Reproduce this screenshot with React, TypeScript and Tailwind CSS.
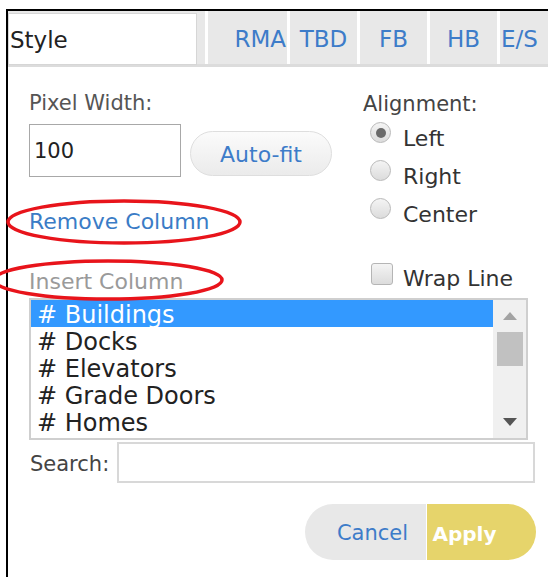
import { useState } from 'react';

const tabs = [
  { label: 'RMA', cls: 'w-[79px] justify-end pr-[1px]' },
  { label: 'TBD', cls: 'w-[67px] justify-center' },
  { label: 'FB', cls: 'w-[67px] justify-center' },
  { label: 'HB', cls: 'w-[67px] justify-center' },
  { label: 'E/S', cls: 'flex-1 justify-start pl-[1px]' },
];

const fields = ['# Buildings', '# Docks', '# Elevators', '# Grade Doors', '# Homes'];

const alignments = ['Left', 'Right', 'Center'];

function Radio({ checked }: { checked: boolean }) {
  return (
    <span className="flex h-[21px] w-[21px] shrink-0 items-center justify-center rounded-full border border-[#b9b9b9] bg-gradient-to-b from-[#f4f4f4] to-[#dcdcdc]">
      {checked && <span className="h-[10px] w-[10px] rounded-full bg-[#6a6a6a]" />}
    </span>
  );
}

export default function App() {
  const [align] = useState('Left');

  return (
    <div
      className="relative h-[577px] w-[548px] overflow-hidden bg-white"
      style={{ fontFamily: '"DejaVu Sans", Verdana, sans-serif' }}
    >
      <div className="ml-[6px] mt-[9px] h-[568px] border-l-2 border-t-2 border-black">
        {/* header: column name + tabs */}
        <div className="flex h-[56px] border-b-[3px] border-[#dcdcdc] bg-[#e8e8e8]">
          <div className="mt-[2px] flex h-[52px] w-[189px] items-center border border-[#d6d6d6] bg-white pl-[1px] pt-[2px] text-[23px] text-[#222]">
            Style
          </div>
          <div className="w-[8px]" />
          {tabs.map((t) => (
            <div key={t.label} className="flex">
              <div className="w-[3px] bg-white" />
              <div className={`flex items-center whitespace-nowrap pt-[4px] text-[23px] text-[#3d7cc9] ${t.cls}`}>
                {t.label}
              </div>
            </div>
          ))}
        </div>

        <div className="flex pl-[21px] pt-[23px]">
          {/* left column */}
          <div className="w-[334px]">
            <div className="text-[21px] leading-[26px] text-[#555]">Pixel Width:</div>
            <div className="mt-[8px] flex items-end">
              <div className="flex h-[53px] w-[152px] items-center border border-[#a8a8a8] pl-[4px] pt-[2px] text-[21px] text-[#222]">
                100
              </div>
              <button className="ml-[9px] mb-[1px] h-[45px] w-[142px] rounded-full border border-[#dedede] bg-gradient-to-b from-[#fbfbfb] to-[#ebebeb] pt-[2px] text-[22px] text-[#3d7cc9]">
                Auto-fit
              </button>
            </div>
            <div className="mt-[32px] whitespace-nowrap text-[22px] leading-[26px] text-[#3a7cc6]">Remove Column</div>
            <div className="mt-[34px] whitespace-nowrap text-[22px] leading-[26px] text-[#9a9a9a]">Insert Column</div>
          </div>

          {/* right column */}
          <div className="pt-[1px]">
            <div className="text-[21px] leading-[26px] text-[#444]">Alignment:</div>
            <div className="mt-[5px] flex flex-col gap-[17px] pl-[7px]">
              {alignments.map((a) => (
                <div key={a} className="flex h-[21px] items-start gap-[12px]">
                  <Radio checked={a === align} />
                  <span className="mt-[4px] text-[22px] leading-[26px] text-[#333]">{a}</span>
                </div>
              ))}
            </div>
            <div className="mt-[44px] flex items-start gap-[10px] pl-[8px]">
              <span className="h-[22px] w-[22px] shrink-0 rounded-[3px] border border-[#b5b5b5] bg-gradient-to-b from-[#f4f4f4] to-[#dcdcdc]" />
              <span className="mt-[3px] whitespace-nowrap text-[22px] leading-[26px] text-[#333]">Wrap Line</span>
            </div>
          </div>
        </div>

        {/* field list */}
        <div className="ml-[21px] mt-[3px] flex h-[142px] w-[499px] border-2 border-[#cfcfcf]">
          <div className="flex-1 overflow-hidden">
            {fields.map((f, i) => (
              <div
                key={f}
                className={`h-[27px] whitespace-nowrap pl-[6px] text-[24px] leading-[30px] ${
                  i === 0 ? 'bg-[#3399ff] text-white' : 'text-[#222]'
                }`}
              >
                {f}
              </div>
            ))}
          </div>
          <div className="flex w-[33px] flex-col items-center bg-[#f0f0f0]">
            <svg className="mt-[12px]" width="14" height="8" viewBox="0 0 14 8">
              <path d="M7 0 L14 8 L0 8 Z" fill="#a3a3a3" />
            </svg>
            <div className="mt-[12px] h-[34px] w-[26px] bg-[#c1c1c1]" />
            <svg className="mt-auto mb-[12px]" width="14" height="8" viewBox="0 0 14 8">
              <path d="M0 0 L14 0 L7 8 Z" fill="#555" />
            </svg>
          </div>
        </div>

        {/* search */}
        <div className="ml-[22px] mt-[2px] flex items-center">
          <span className="w-[87px] pt-[4px] text-[21px] text-[#444]">Search:</span>
          <div className="h-[41px] w-[418px] border-2 border-[#d8d8d8]" />
        </div>

        {/* actions */}
        <div className="ml-[297px] mt-[21px] flex h-[56px] w-[231px] overflow-hidden rounded-full">
          <button className="w-[121px] bg-[#e8e8e8] pl-[14px] pt-[3px] text-[21px] text-[#3d7cc9]">Cancel</button>
          <div className="w-[1px] bg-white" />
          <button className="flex-1 bg-[#e6d46b] pr-[34px] pt-[3px] text-[20px] font-bold text-white">Apply</button>
        </div>
      </div>

      {/* red annotations */}
      <svg className="pointer-events-none absolute inset-0" width="548" height="577">
        <ellipse cx="124" cy="222" rx="116" ry="21" fill="none" stroke="#e8141b" strokeWidth="3.5" />
        <ellipse cx="108" cy="280" rx="114" ry="19" fill="none" stroke="#e8141b" strokeWidth="3.5" />
      </svg>
    </div>
  );
}
